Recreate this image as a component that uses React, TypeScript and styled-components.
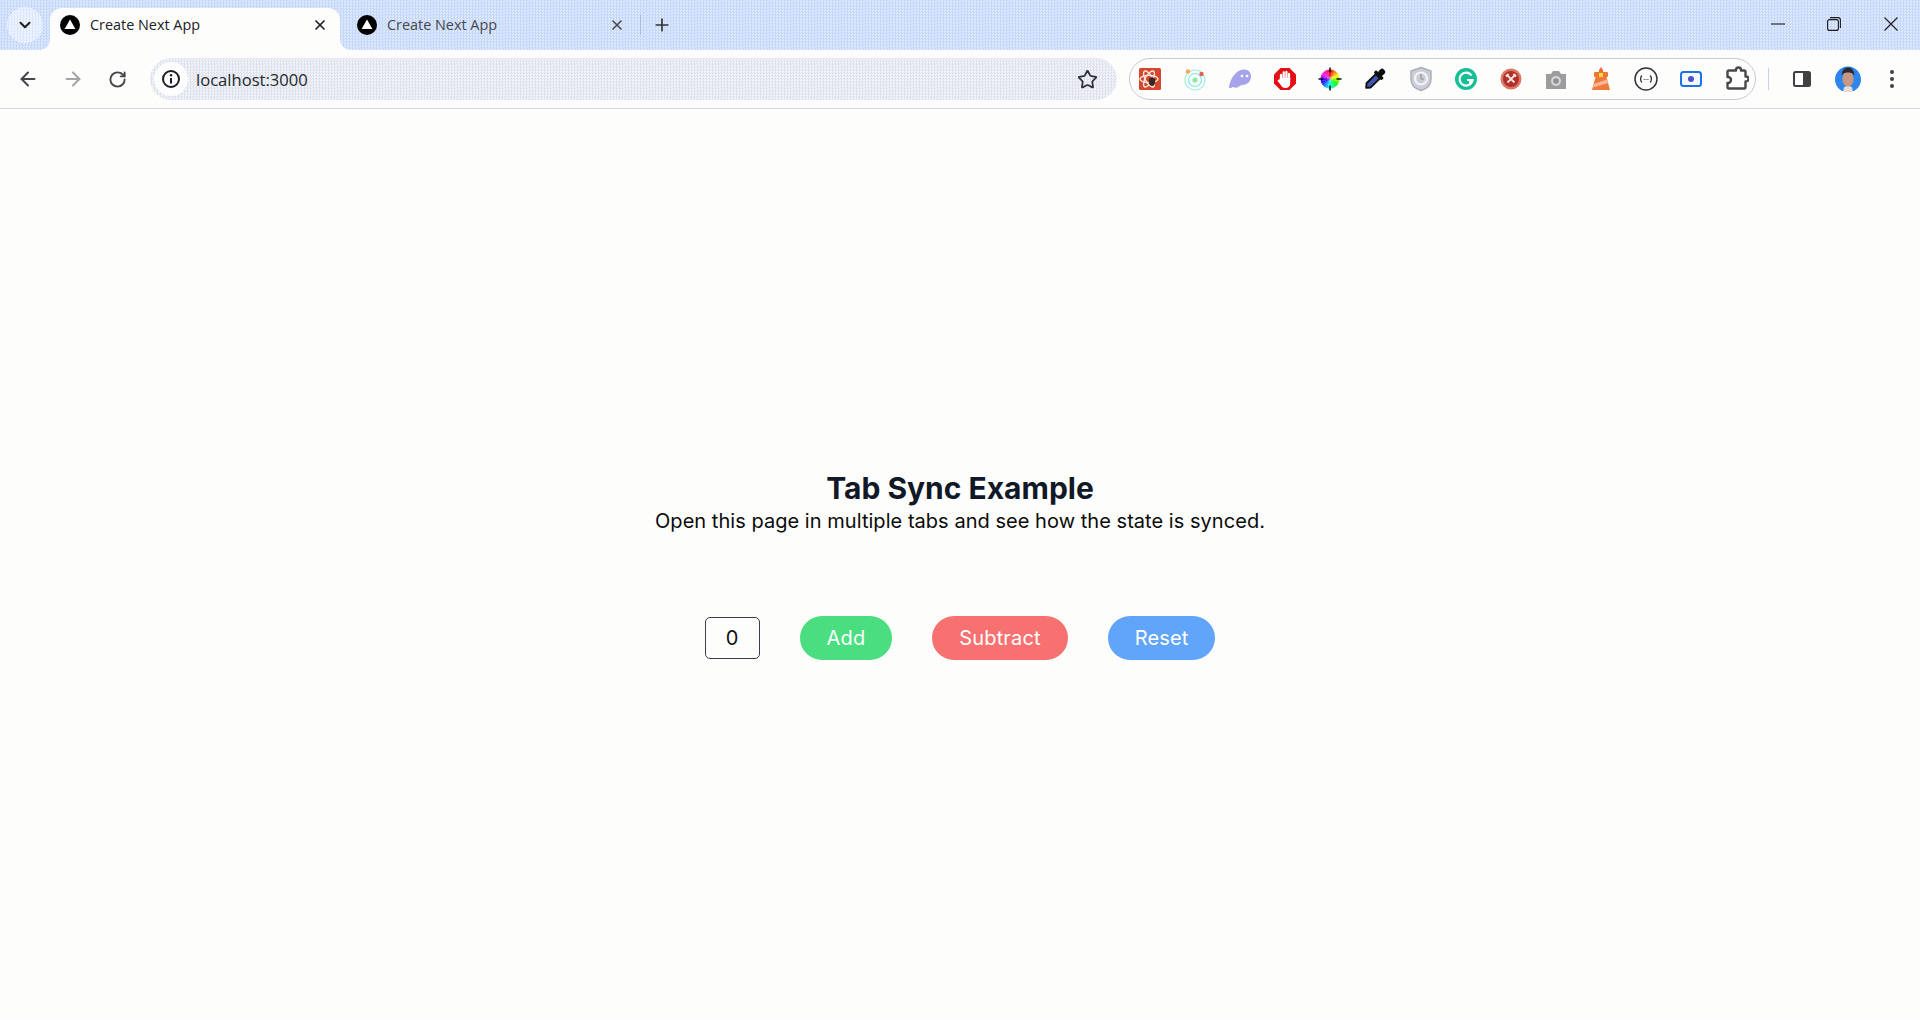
import React from "react";
import styled, { createGlobalStyle, css } from "styled-components";
import { ArrowLeft, ArrowRight, ChevronDown, Plus, RotateCw, Star, X } from "lucide-react";

const Global = createGlobalStyle`
  html, body { margin: 0; padding: 0; background: #fefefd; overflow: hidden; }
  * { box-sizing: border-box; }
`;

const dots = css`
  background-color: #fdfdfd;
  background-image:
    radial-gradient(circle at 0.5px 0.5px, #fdfbd2 0.6px, transparent 0.7px),
    radial-gradient(circle at 0.5px 0.5px, #fdfbd2 0.6px, transparent 0.7px);
  background-size: 8px 8px;
  background-position: 0 0, 4px 4px;
`;

const stripBg = `repeating-conic-gradient(#c5d8fa 0 25%, #dee9fd 0 50%) 0 0 / 3px 3px`;

const Page = styled.div`
  width: 1920px;
  height: 1020px;
  display: flex;
  flex-direction: column;
  ${dots}
`;

const Strip = styled.div`
  height: 50px;
  display: flex;
  align-items: flex-end;
  background: ${stripBg};
  padding-left: 7px;
  font-family: "Open Sans", "Noto Sans", sans-serif;
`;

const TabSearch = styled.div`
  width: 36px;
  height: 36px;
  border-radius: 50%;
  margin-bottom: 7px;
  background: repeating-conic-gradient(#dbe7fc 0 25%, #f0f5ff 0 50%) 0 0 / 3px 3px;
  color: #222;
  display: flex;
  align-items: center;
  justify-content: center;
`;

const Tab = styled.div<{ $active?: boolean }>`
  position: relative;
  width: 290px;
  height: 42px;
  margin-left: 7px;
  padding: 0 10px 8px;
  display: flex;
  align-items: center;
  border-radius: 12px 12px 0 0;
  color: ${(p) => (p.$active ? "#202124" : "#46484c")};
  ${(p) =>
    p.$active &&
    css`
      ${dots}
      &::before, &::after {
        content: "";
        position: absolute;
        bottom: 0;
        width: 10px;
        height: 10px;
      }
      &::before {
        left: -10px;
        background: radial-gradient(circle at 0 0, transparent 9.5px, #fdfdfd 10px);
      }
      &::after {
        right: -10px;
        background: radial-gradient(circle at 100% 0, transparent 9.5px, #fdfdfd 10px);
      }
    `}
`;

const TabTitle = styled.span`
  flex: 1;
  margin-left: 10px;
  font-size: 14.4px;
  line-height: 20px;
  white-space: nowrap;
`;

const TabClose = styled.span`
  width: 20px;
  height: 20px;
  display: flex;
  align-items: center;
  justify-content: center;
`;

const TabDivider = styled.div`
  width: 1px;
  height: 20px;
  margin: 0 0 15px 3px;
  background: #a9bedf;
`;

const NewTab = styled.div`
  width: 28px;
  height: 28px;
  margin: 0 0 11px 7px;
  color: #333;
  display: flex;
  align-items: center;
  justify-content: center;
`;

const WindowControls = styled.div`
  margin-left: auto;
  height: 50px;
  padding-right: 1px;
  display: flex;
  align-items: center;
  color: #1c1c1c;
`;

const WindowButton = styled.div`
  width: 56.5px;
  display: flex;
  justify-content: center;
  margin-top: -2px;
`;

const Toolbar = styled.div`
  position: relative;
  height: 59px;
  padding: 8px 0 8px 5px;
  display: flex;
  align-items: center;
  border-bottom: 1px solid #d8d8d4;
  border-radius: 10px 10px 0 0;
  font-family: "Open Sans", "Noto Sans", sans-serif;
  ${dots}
`;

const NavButton = styled.div<{ $dim?: boolean }>`
  width: 45px;
  height: 42px;
  display: flex;
  align-items: center;
  justify-content: center;
  color: ${(p) => (p.$dim ? "#a4a5a7" : "#44464a")};
`;

const Omnibox = styled.div`
  width: 967px;
  height: 42px;
  margin-left: 10px;
  padding: 0 19px 0 4px;
  border-radius: 21px;
  display: flex;
  align-items: center;
  background: repeating-conic-gradient(#dde2ec 0 25%, #f3f5fa 0 50%) 0 0 / 3px 3px;
`;

const SiteInfo = styled.div`
  width: 34px;
  height: 34px;
  border-radius: 50%;
  background: #fdfdfd;
  display: flex;
  align-items: center;
  justify-content: center;
`;

const Url = styled.span`
  margin-left: 8px;
  flex: 1;
  font-size: 16.6px;
  color: #26282c;
`;

const ExtensionPill = styled.div`
  width: 627px;
  height: 42px;
  margin-left: 12px;
  padding-left: 7px;
  border: 1px solid #c9c9d6;
  border-radius: 21px;
  display: flex;
  align-items: center;
  gap: 19.1px;
`;

const ExtIcon = styled.svg`
  width: 26px;
  height: 26px;
  flex: none;
`;

const ToolDivider = styled.div`
  width: 1px;
  height: 22px;
  margin-left: 12px;
  background: #c5d3ea;
`;

const SideButton = styled.div`
  width: 18px;
  height: 16px;
  margin-left: 24px;
  display: flex;
`;

const Avatar = styled.svg`
  width: 26px;
  height: 26px;
  margin-left: 24px;
`;

const MenuDots = styled.div`
  margin-left: 29px;
  display: flex;
  flex-direction: column;
  gap: 3px;
`;

const Dot = styled.span`
  width: 4px;
  height: 4px;
  border-radius: 50%;
  background: #3e4043;
`;

const Main = styled.main`
  flex: 1;
  padding-top: 1px;
  display: flex;
  flex-direction: column;
  align-items: center;
  justify-content: center;
  font-family: Inter, "Liberation Sans", sans-serif;
`;

const Heading = styled.h1`
  margin: 0 0 1px;
  font-size: 30px;
  line-height: 36px;
  font-weight: 700;
  color: #111827;
`;

const Lead = styled.p`
  margin: 0 0 81px;
  font-size: 20px;
  line-height: 28px;
  letter-spacing: 0.04px;
  color: #0b0b0b;
`;

const Controls = styled.div`
  display: flex;
  align-items: center;
  gap: 40px;
`;

const Count = styled.div`
  width: 55px;
  height: 42px;
  border: 1px solid #3c3f48;
  border-radius: 5px;
  display: flex;
  align-items: center;
  justify-content: center;
  font-size: 20px;
  color: #111;
`;

const Action = styled.button<{ $bg: string }>`
  height: 44px;
  padding: 0 27px;
  border: 0;
  border-radius: 22px;
  background: ${(p) => p.$bg};
  color: #fff;
  font-family: inherit;
  font-size: 20px;
  line-height: 28px;
  font-weight: 400;
  letter-spacing: 0.15px;
`;

const NextLogo = () => (
  <svg width="20" height="20" viewBox="0 0 20 20">
    <circle cx="10" cy="10" r="10" fill="#000" />
    <path d="M10 4.6 15.4 14H4.6Z" fill="#fff" />
  </svg>
);

const wedge = (i: number) => {
  const a = ((i * 15 - 90) * Math.PI) / 180;
  const b = (((i + 1) * 15 - 90) * Math.PI) / 180;
  return `M13 13L${13 + 9.5 * Math.cos(a)} ${13 + 9.5 * Math.sin(a)}A9.5 9.5 0 0 1 ${13 + 9.5 * Math.cos(b)} ${13 + 9.5 * Math.sin(b)}Z`;
};

const wheelWedges = Array.from({ length: 24 }, (_, i) => i);

const extensionIcons: React.ReactNode[] = [
  <>
    <rect x="2" y="2" width="22" height="22" rx="1.5" fill="#d4472f" />
    <g fill="none" stroke="#fbe6dc" strokeWidth="1.4">
      <ellipse cx="12" cy="13" rx="9" ry="3.6" />
      <ellipse cx="12" cy="13" rx="9" ry="3.6" transform="rotate(60 12 13)" />
      <ellipse cx="12" cy="13" rx="9" ry="3.6" transform="rotate(120 12 13)" />
    </g>
    <ellipse cx="15" cy="15.5" rx="3.2" ry="4.2" fill="#3a2620" />
  </>,
  <>
    <g fill="none">
      <circle cx="13" cy="14" r="10" stroke="#a5ecd8" strokeWidth="1.2" />
      <circle cx="13" cy="14" r="6.5" stroke="#7fe8e6" strokeWidth="1.2" />
      <circle cx="13" cy="14" r="2.6" fill="#8fe8a8" />
    </g>
    <circle cx="6" cy="5.5" r="2.2" fill="#f0a85a" />
    <circle cx="19.5" cy="8" r="2.2" fill="#e4604c" />
  </>,
  <>
    <path d="M2 22C2.500 14 8 4.500 16 3.500c5-.5 8 2.500 8 6.500 0 5.500-3.500 8.500-8.500 9-2 .2-3.500 1.500-5.500 2.500-2 .8-3-.8-4-.5-1 .5-2.500 1.500-4 1Z" fill="#a7a3ea" />
    <circle cx="15" cy="10" r="1.3" fill="#fff" />
    <circle cx="20" cy="10" r="1.3" fill="#fff" />
  </>,
  <>
    <path d="M8.500 2h9L24 8.500v9L17.500 24h-9L2 17.500v-9Z" fill="#e30d13" />
    <path d="M9 14V9M11.700 13V6.500M14.400 13V6M17 14V8" stroke="#fff" strokeWidth="2.300" strokeLinecap="round" />
    <path d="M7.800 12h10.400v5.500c0 2.800-2 4.500-4.700 4.500-2.300 0-3.700-1-4.700-3L5.800 15.200c-.7-1.300.9-2.300 1.800-1.200Z" fill="#fff" />
  </>,
  <>
    {wheelWedges.map((i) => (
      <path key={i} d={wedge(i)} fill={`hsl(${i * 15} 95% 52%)`} />
    ))}
    <path d="M13 1.500v5M13 19.500v5M1.500 13h5M19.500 13h5" stroke="#111" strokeWidth="1.500" />
  </>,
  <g transform="rotate(45 13 13)">
    <rect x="10" y="0" width="6" height="7" rx="2.500" fill="#0c0c0c" />
    <rect x="7.500" y="6" width="11" height="3.400" rx="1" fill="#0c0c0c" />
    <path d="M10 9h6v13l-3 3.500-3-3.500Z" fill="#3f54ad" stroke="#0c0c0c" strokeWidth="1.800" strokeLinejoin="round" />
  </g>,
  <>
    <path d="M13 1.500 23 5v8c0 6-4.500 10-10 11.500C7.500 23 3 19 3 13V5Z" fill="#ccced6" stroke="#a9acb9" strokeWidth="1.400" />
    <circle cx="13" cy="12.500" r="6" fill="none" stroke="#f3f4f7" strokeWidth="2.200" />
    <path d="M13 8v5h3" fill="none" stroke="#9ea2b1" strokeWidth="1.600" />
  </>,
  <>
    <circle cx="13" cy="13" r="11" fill="#15bf94" />
    <path d="M18.500 9.500A6.500 6.500 0 1 0 19.500 14H14" fill="none" stroke="#fff" strokeWidth="2.200" />
    <path d="M17 14.500v3" stroke="#fff" strokeWidth="1.800" />
  </>,
  <>
    <circle cx="13" cy="13" r="10.500" fill="#d97a66" />
    <circle cx="13" cy="13" r="8" fill="#b3302a" />
    <path d="M9.500 16.500 16.500 9.500M9.500 9.500l7 7" stroke="#f5e5dc" strokeWidth="1.800" />
    <path d="M8 10.500 10.500 8M15.500 8 18 10.500" stroke="#f5e5dc" strokeWidth="2.200" />
  </>,
  <>
    <path d="M3 8h5l2-3h6l2 3h5v15H3Z" fill="#9c9c9c" />
    <circle cx="13" cy="15" r="5" fill="#d5d5d5" />
    <circle cx="13" cy="15" r="2.800" fill="#8d8d9a" />
  </>,
  <>
    <path d="M13 1l2 3v2h-4V4Z" fill="#ef6a2e" />
    <rect x="6" y="6" width="14" height="5" rx="1" fill="#f2772e" />
    <rect x="11" y="7" width="4" height="4" fill="#f8d84a" />
    <path d="M7.500 11h11L22 24H4Z" fill="#f07a3c" />
    <path d="M6 18 19 13.500l1 3.500L5 21.500Z" fill="#f8b79a" />
  </>,
  <>
    <circle cx="13" cy="13" r="11" fill="none" stroke="#33353a" strokeWidth="1.500" />
    <path d="M8.800 9.500C7 12 7 14 8.800 16.500M17.200 9.500c1.800 2.500 1.800 4.500 0 7" fill="none" stroke="#33353a" strokeWidth="1.300" />
    <path d="M10.700 13.500h.9M12.600 13.500h.9M14.500 13.500h.9" stroke="#33353a" strokeWidth="1.200" />
  </>,
  <>
    <rect x="3" y="6" width="20" height="14" rx="2.500" fill="#f6f9ff" stroke="#1a73e8" strokeWidth="2" />
    <circle cx="13" cy="13" r="3" fill="#4a52cc" />
  </>,
  <path
    d="M10 4.500h3V4a2.500 2.500 0 0 1 5 0v.5h3a1.500 1.500 0 0 1 1.500 1.500v4.500h.5a2.500 2.500 0 0 1 0 5h-.5V21a1.500 1.500 0 0 1-1.500 1.500H6A1.500 1.500 0 0 1 4.500 21v-4h.5a3 3 0 0 0 0-6h-.5V6A1.500 1.500 0 0 1 6 4.500Z"
    fill="none"
    stroke="#46484a"
    strokeWidth="2.400"
    strokeLinejoin="round"
  />,
];

export default function App() {
  return (
    <Page>
      <Global />
      <Strip>
        <TabSearch>
          <ChevronDown size={18} strokeWidth={2.8} />
        </TabSearch>
        <Tab $active>
          <NextLogo />
          <TabTitle>Create Next App</TabTitle>
          <TabClose>
            <X size={16} strokeWidth={2.6} />
          </TabClose>
        </Tab>
        <Tab>
          <NextLogo />
          <TabTitle>Create Next App</TabTitle>
          <TabClose>
            <X size={16} strokeWidth={2.4} />
          </TabClose>
        </Tab>
        <TabDivider />
        <NewTab>
          <Plus size={20} strokeWidth={2} />
        </NewTab>
        <WindowControls>
          <WindowButton>
            <svg width="14" height="14" viewBox="0 0 14 14">
              <path d="M0 7h14" stroke="currentColor" strokeWidth="1.1" />
            </svg>
          </WindowButton>
          <WindowButton>
            <svg width="14" height="14" viewBox="0 0 14 14" fill="none" stroke="currentColor" strokeWidth="1.100">
              <rect x="0.600" y="2.600" width="10.800" height="10.800" rx="2" />
              <path d="M3 .6h8a2.400 2.400 0 0 1 2.400 2.400v8" />
            </svg>
          </WindowButton>
          <WindowButton>
            <svg width="14" height="14" viewBox="0 0 14 14">
              <path d="M.5.5l13 13M13.500.5l-13 13" stroke="currentColor" strokeWidth="1.100" />
            </svg>
          </WindowButton>
        </WindowControls>
      </Strip>
      <Toolbar>
        <NavButton>
          <ArrowLeft size={22} strokeWidth={2.2} />
        </NavButton>
        <NavButton $dim>
          <ArrowRight size={22} strokeWidth={2.2} />
        </NavButton>
        <NavButton>
          <RotateCw size={19} strokeWidth={2.4} />
        </NavButton>
        <Omnibox>
          <SiteInfo>
            <svg width="20" height="20" viewBox="0 0 20 20">
              <circle cx="10" cy="10" r="8" fill="none" stroke="#1c1d20" strokeWidth="2" />
              <path d="M10 9v5.500" stroke="#1c1d20" strokeWidth="2" />
              <circle cx="10" cy="6.300" r="1.200" fill="#1c1d20" />
            </svg>
          </SiteInfo>
          <Url>localhost:3000</Url>
          <Star size={21} strokeWidth={2} color="#2e3034" />
        </Omnibox>
        <ExtensionPill>
          {extensionIcons.map((icon, i) => (
            <ExtIcon key={i} viewBox="0 0 26 26">
              {icon}
            </ExtIcon>
          ))}
        </ExtensionPill>
        <ToolDivider />
        <SideButton>
          <svg width="18" height="16" viewBox="0 0 18 16">
            <rect x="1" y="1" width="16" height="14" rx="1.500" fill="#fff" stroke="#3f4042" strokeWidth="2" />
            <rect x="10" y="1" width="7" height="14" fill="#3f4042" />
          </svg>
        </SideButton>
        <Avatar viewBox="0 0 26 26">
          <path d="M7 25A13 13 0 1 1 19 25Z" fill="#2f86ea" />
          <path d="M8.500 26v-3c0-2 2-3 4.500-3s4.500 1 4.500 3v3Z" fill="#e8dcd6" />
          <ellipse cx="13" cy="13" rx="5.600" ry="7.500" fill="#c99684" />
          <path d="M6.500 10C6.500 4 10 1.500 13 1.500S19.500 4 19.500 10c-1-2.500-2.500-3.500-6.500-3.500S7.500 7.500 6.500 10Z" fill="#2c2a2e" />
        </Avatar>
        <MenuDots>
          <Dot />
          <Dot />
          <Dot />
        </MenuDots>
      </Toolbar>
      <Main>
        <Heading>Tab Sync Example</Heading>
        <Lead>Open this page in multiple tabs and see how the state is synced.</Lead>
        <Controls>
          <Count>0</Count>
          <Action $bg="#4ade80">Add</Action>
          <Action $bg="#f87171">Subtract</Action>
          <Action $bg="#60a5fa">Reset</Action>
        </Controls>
      </Main>
    </Page>
  );
}
